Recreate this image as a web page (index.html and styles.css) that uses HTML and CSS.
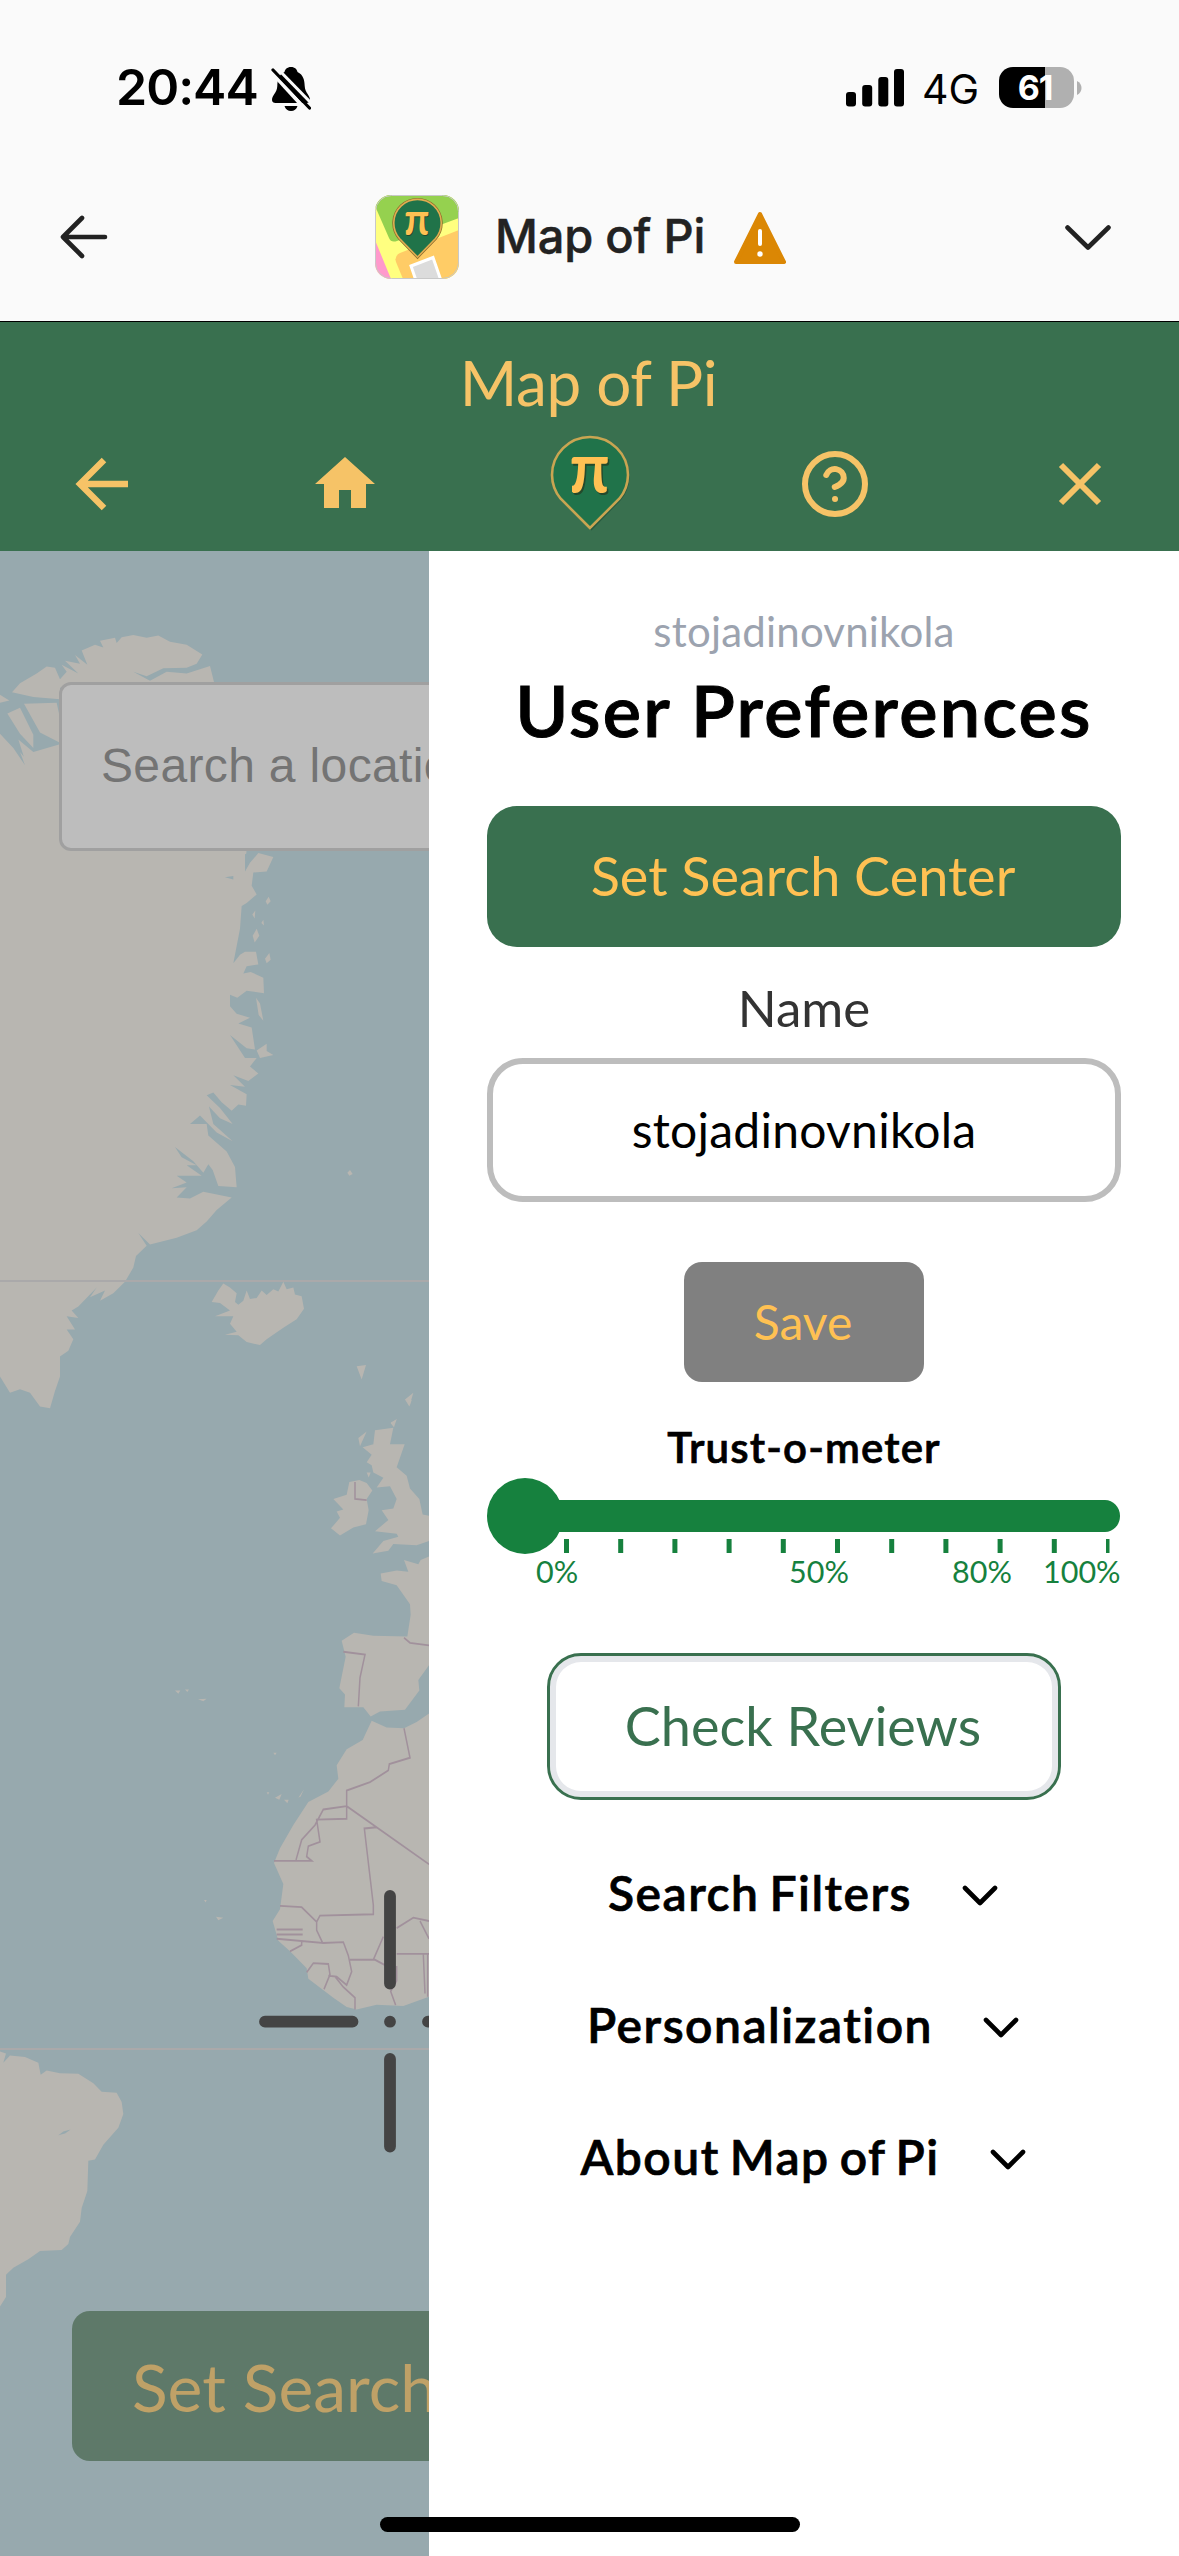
FILE: index.html
```html
<!DOCTYPE html>
<html lang="en">
<head>
<meta charset="utf-8">
<title>Map of Pi</title>
<link rel="stylesheet" href="styles.css">
</head>
<body>
<div class="screen">
  <div class="status">
    <span class="time">20:44</span>
    <svg class="bell" width="40" height="46" viewBox="0 0 40 46">
      <path d="M20 1c-4 0-6 2.500-6.500 5C7.500 9 6.500 14 6.300 20 6 27 1 29 1 34c0 2 1.500 3 3.500 3h31c2 0 3.500-1 3.500-3 0-5-5-7-5.300-14-.2-6-1.200-11-7.200-14C26 3.500 24 1 20 1zM13.500 40h13c-1 3.500-3.500 5-6.500 5s-5.500-1.500-6.500-5z"/>
      <path d="M-1 4.500 37 46" stroke="#fafafa" stroke-width="4"/><path d="M3 -1 41 38" stroke="#fafafa" stroke-width="3"/>
      <path d="M2 4 38.500 42" stroke="#000" stroke-width="3.200" stroke-linecap="round"/>
    </svg>
    <svg class="signal" width="58" height="38" viewBox="0 0 58 38"><rect y="23" width="10" height="14.500" rx="3"/><rect x="16.200" y="16" width="10" height="21.500" rx="3"/><rect x="32.300" y="8" width="10" height="29.500" rx="3"/><rect x="48" width="10" height="37.500" rx="3"/></svg>
    <span class="net">4G</span>
    <div class="battery"><span>61</span></div>
    <svg width="5" height="14" viewBox="0 0 5 14" class="nub"><path d="M0 0c6 3 6 11 0 14z" fill="#b0b0b0"/></svg>
  </div>

  <div class="browser">
    <svg class="b-back" width="50" height="44" viewBox="0 0 50 44"><path d="M24 3 5 22l19 19M5 22h42" fill="none" stroke="#222" stroke-width="4.600" stroke-linecap="round" stroke-linejoin="round"/></svg>
    <svg class="app" width="84" height="84" viewBox="0 0 84 84">
      <clipPath id="app-clip"><rect width="84" height="84" rx="16"/></clipPath>
      <g clip-path="url(#app-clip)">
        <path fill="#ffff80" d="M0 0h84v84H0z"/>
        <path fill="#95d14f" d="M0 0h84v23L22 46q-6 2-8-3L0 11z"/>
        <path fill="#ff99cc" d="M0 45l16 39H0z"/>
        <path fill="#ffcc66" d="M84 35v49H28l-7-17q-2-6 4-9z"/>
        <path fill="#dcdcdc" stroke="#fff" stroke-width="3" d="M36 71l22-8.500 9 26H42z"/>
        <path fill="#207349" stroke="#8b6a2c" stroke-width="3" d="M42.500 62 24.500 43.500A23.700 23.700 0 1 1 60.500 43.500z"/>
        <path fill="#207349" stroke="#e0ad50" stroke-width="1.600" d="M42.500 62 24.500 43.500A23.700 23.700 0 1 1 60.500 43.500z"/>
        <text class="pi shade" x="30" y="40.500" font-size="43" textLength="25" lengthAdjust="spacingAndGlyphs">π</text>
        <text class="pi" x="29.300" y="39.800" font-size="43" textLength="25" lengthAdjust="spacingAndGlyphs">π</text>
      </g>
      <rect x=".5" y=".5" width="83" height="83" rx="16" fill="none" stroke="#c8c8c8"/>
    </svg>
    <span class="b-title">Map of Pi</span>
    <svg class="warn" width="54" height="54" viewBox="0 0 54 54"><path d="M27 3 51 51H3z" fill="#db8704" stroke="#db8704" stroke-width="4" stroke-linejoin="round"/><path d="M27 20v13" stroke="#fff" stroke-width="4" stroke-linecap="round"/><circle cx="27" cy="43" r="2.700" fill="#fff"/></svg>
    <svg class="b-down" width="46" height="26" viewBox="0 0 46 26"><path d="M2.500 2.500 23 22.500 43.500 2.500" fill="none" stroke="#222" stroke-width="4.600" stroke-linecap="round" stroke-linejoin="round"/></svg>
  </div>

  <header class="header">
    <div class="brand">Map of Pi</div>
    <nav class="nav">
      <svg width="72" height="72" viewBox="0 0 72 72"><path d="M40 12 16 36l24 24M16 36h48" fill="none" stroke="#f6c367" stroke-width="6.400"/></svg>
      <svg width="72" height="72" viewBox="0 0 24 24"><path d="M10 20v-6h4v6h5v-8h3L12 3 2 12h3v8z" fill="#f6c367"/></svg>
      <svg class="pin" width="84" height="100" viewBox="0 0 84 100">
        <path d="M43.500 96.500 14 66A37.800 37.800 0 0 1 3.500 42a39 39 0 0 1 78 0 37.800 37.800 0 0 1-8.500 24z" fill="#1b4a33" opacity=".6"/>
        <path d="M42 94 12.500 64.500A37.800 37.800 0 0 1 4 41a38 38 0 0 1 76 0 37.800 37.800 0 0 1-8.500 23.500z" fill="#20734a" stroke="#c9a552" stroke-width="2.600"/>
        <text class="pi shade" x="23" y="60.500" font-size="71" textLength="40" lengthAdjust="spacingAndGlyphs">π</text>
        <text class="pi" x="21.500" y="58.800" font-size="71" textLength="40" lengthAdjust="spacingAndGlyphs">π</text>
      </svg>
      <svg width="72" height="72" viewBox="0 0 24 24" fill="none" stroke="#f6c367" stroke-width="2" stroke-linecap="round"><circle cx="12" cy="12" r="10"/><path d="M9.090 9a3 3 0 0 1 5.830 1c0 2-3 3-3 3M12 17h.01"/></svg>
      <svg width="72" height="72" viewBox="0 0 72 72"><path d="M17 17 55 55M55 17 17 55" stroke="#f6c367" stroke-width="6"/></svg>
    </nav>
  </header>

  <main class="main">
    <section class="map">
      <svg class="tiles" width="429" height="2005" viewBox="0 551 429 2005">
        <!-- Greenland, Iceland and the northern islands -->
        <g transform="translate(0 550) scale(.33333 .574)" fill="#b8b6b1">
          <path d="M0 252 28 262 0 266zM22 285 60 275 100 322 100 345 60 320zM72 268 170 266 177 285V335L120 318zM36 248 60 232 110 215 140 203 165 205 180 225 200 212 185 200 235 215 195 193 240 198 225 183 262 200 245 175 285 165 310 170 300 158 345 153 350 162 365 152 400 148 440 153 475 149 510 160 560 165 607 182 590 198 560 205 490 206 440 220 400 212 450 228 500 212 560 215 630 202 642 230 500 240H180V260L100 256z"/>
          <path d="M0 320 40 345 75 375 60 352 92 375 105 392 85 385 55 330 100 352 200 335 642 230 720 300 740 520 735 560 750 545 775 528 820 535 800 560 760 562 755 585 770 600 740 615 725 620 720 660 700 720 720 705 735 700 768 700 775 722 740 725 730 738 752 735 790 745 792 772 740 768 712 780 690 775 690 795 710 808 750 815 715 825 755 832 765 870 740 868 690 845 735 885 770 885 750 900 775 912 745 925 700 915 735 935 690 932 740 948 738 968 715 966 695 977 665 962 640 945 620 950 660 972 698 1000 660 990 620 965 600 940 625 965 640 1000 698 1030 650 1015 600 985 560 965 600 985 570 1000 620 1000 625 1020 680 1048 705 1075 710 1110 655 1108 638 1080 625 1070 610 1085 580 1065 525 1040 545 1058 590 1072 560 1072 605 1090 530 1090 560 1102 515 1112 560 1110 530 1128 570 1130 610 1118 695 1128 650 1150 620 1170 590 1185 530 1198 450 1210 415 1190 440 1212 408 1230 400 1250 375 1275 340 1295 300 1308 315 1290 270 1302 290 1285 235 1318 215 1325 235 1338 200 1335 225 1358 200 1358 220 1375 205 1395 180 1405 180 1440 165 1465 150 1495 120 1492 90 1468 60 1462 30 1468 0 1440Z"/>
          <path d="M635 1310 655 1290 670 1278 690 1285 710 1295 705 1310 715 1315 730 1308 740 1290 750 1305 770 1303 785 1290 800 1298 820 1288 835 1292 850 1275 860 1288 880 1285 885 1297 905 1300 912 1322 890 1340 850 1355 800 1375 780 1385 740 1380 715 1368 675 1367 710 1362 690 1348 700 1335 645 1335 690 1325 660 1312z"/>
          <path d="M1042 1085 1050 1080 1058 1087 1048 1090zM1070 1422 1098 1420 1085 1445zM1215 1480 1240 1468 1228 1492zM1172 1520 1190 1515 1180 1526zM770 872 800 860 800 873 820 880 780 885zM768 780 780 790 790 820 776 810zM795 712 808 702 812 714 800 720zM797 612 806 604 812 612 802 618zM757 635 766 628 764 642zM784 650 790 644 792 654zM758 672 770 660 778 672 764 684z"/>
          <path d="M675 570 700 568 700 574zM735 560 748 527 735 530z" fill="#97a9ae"/>
        </g>
        <!-- Europe and West Africa -->
        <g transform="translate(0 1400) scale(.33333 .42088)">
          <g fill="#b8b6b1">
            <path d="M1220 0h15l-6 14zM1172 55 1190 45 1182 65z"/>
            <path d="M1125 72 1180 66 1170 105 1214 105 1190 160 1220 180 1230 210 1258 235 1268 272 1287 275V335L1250 345 1180 342 1165 358 1118 365 1150 335 1195 325 1190 318 1125 312 1165 285 1145 262 1180 258 1190 235 1170 205 1130 208 1150 185 1120 172 1115 155 1100 148 1115 130 1088 112 1120 105zM1075 90 1100 75 1080 110zM1100 172h12l-6 12z"/>
            <path d="M1048 195 1078 190 1100 197 1117 215 1100 235 1106 262 1098 295 1060 303 1020 322 993 305 1020 280 1010 265 1030 260 1000 235 1040 225z"/>
            <path d="M1287 372 1262 380 1255 390 1212 380 1225 408 1190 405 1142 412 1145 430 1190 440 1230 485 1232 510 1222 562 1120 560 1062 553 1025 572 1037 610 1018 685 1035 700 1033 730 1090 730 1112 752 1140 740 1215 736 1258 690 1255 665 1287 630z"/>
            <path d="M1287 745 1250 765 1212 780 1160 778 1115 762 1088 808 1040 830 1010 868 1015 900 985 930 925 955 880 1010 840 1065 822 1100 850 1150 840 1210 818 1238 835 1285 870 1310 920 1350 925 1375 1000 1420 1040 1442 1070 1448 1130 1437 1210 1440 1287 1418z"/>
            <path d="M525 690h16l-6 8zM555 688h12l-5 6zM594 711 620 710 610 716zM820 838h10l-5 6zM825 945 845 936 838 950zM852 950h14l-4 8zM895 945 912 925 902 942zM800 932h8l-4 6zM612 1188h8l-3 6zM648 1228 670 1230 655 1236z"/>
          </g>
          <g class="borders">
            <path d="M1065 195V235L1100 238M1212 565 1230 577 1287 583M1030 598 1095 605 1080 660 1075 728M1212 780 1230 850 1168 865 1165 880 1110 908 1040 928V995L950 997 960 1050 925 1060 920 1085 935 1095H822M1040 965 970 973 945 1010 905 1045 888 1093M1040 965 1287 1103M1130 1015 1093 1018 1120 1200V1222L960 1225 950 1240 905 1205 840 1202M950 1240 950 1260 968 1290 830 1280M968 1290 1030 1288 1045 1320 1055 1358 1040 1390 1010 1370 985 1368M830 1258h78M830 1270h78M870 1310 905 1295 905 1285M920 1360 940 1338 985 1340 990 1365 972 1400M1005 1370 1030 1395 1065 1420V1448M1050 1330H1125L1155 1343M1120 1330 1150 1275M1190 1255 1240 1230 1287 1238M1260 1238 1287 1280M1190 1316H1287M1270 1318 1275 1410M1190 1345V1380L1172 1405 1187 1438M1283 1316V1418"/>
          </g>
        </g>
        <!-- South America -->
        <g transform="translate(0 2020) scale(.33333 .34184)" fill="#b8b6b1">
          <path d="M0 92 18 98 10 125 30 104 75 108 115 125 122 160 140 148 180 156 235 157 280 185 305 210 350 213 365 240 370 275 355 315 310 365 285 408 265 412 262 500 245 550 240 590 210 635 205 655 185 673 120 676 85 700 40 725 18 745 18 810 0 838z"/>
          <path d="M175 337 190 326 212 320 195 332z" fill="#97a9ae"/>
        </g>
        <path d="M0 1281h429M0 2049h429" stroke="#aaa9aa" stroke-width="2"/>
        <path d="M265 2021.700h87.500M390 1896v87.500M390 2059v87.500M390 2021.700v.01M428 2021.700h20" stroke="#444" stroke-width="11.800" stroke-linecap="round"/>
      </svg>
      <div class="search">Search a location</div>
      <div class="map-btn">Set Search Center</div>
    </section>

    <aside class="panel">
      <div class="user">stojadinovnikola</div>
      <h1>User Preferences</h1>
      <div class="primary">Set Search Center</div>
      <div class="label">Name</div>
      <div class="field">stojadinovnikola</div>
      <div class="save">Save</div>
      <div class="trust">Trust-o-meter</div>
      <svg class="meter" width="634" height="76" viewBox="0 0 634 76">
        <g fill="#16813e"><circle cx="38" cy="38" r="38"/><path d="M38 22H618a15 16 0 0 1 0 32H38z"/></g>
        <path d="M79.500 68H625" stroke="#16813e" stroke-width="14" stroke-dasharray="5 49.200" transform="translate(-2.500 0)"/>
      </svg>
      <div class="scale"><span>0%</span><span>50%</span><span>80%</span><span>100%</span></div>
      <div class="reviews">Check Reviews</div>
      <div class="row">Search Filters<svg class="chev" width="36" height="22" viewBox="0 0 36 22"><path d="M3 3 18 18 33 3"/></svg></div>
      <div class="row">Personalization<svg class="chev" width="36" height="22" viewBox="0 0 36 22"><path d="M3 3 18 18 33 3"/></svg></div>
      <div class="row">About Map of Pi<svg class="chev" width="36" height="22" viewBox="0 0 36 22"><path d="M3 3 18 18 33 3"/></svg></div>
    </aside>
  </main>
  <div class="home-bar"></div>
</div>
</body>
</html>
```

FILE: styles.css
```css
* { box-sizing: border-box; }
body { margin: 0; background: #fff; }
svg { display: block; flex: none; }
.screen {
  position: relative;
  width: 1179px;
  height: 2556px;
  overflow: hidden;
  display: flex;
  flex-direction: column;
  font-family: Lato, sans-serif;
  white-space: nowrap;
}

.status {
  height: 176px;
  flex: none;
  background: #fafafa;
  display: flex;
  align-items: flex-start;
  padding-left: 116px;
  font-family: Inter, sans-serif;
  color: #000;
}
.time { width: 155px; margin-top: 57px; font-size: 50px; line-height: 60px; font-weight: 600; letter-spacing: -1px; }
.bell { margin-top: 66px; }
.signal { margin: 69px 0 0 535px; }
.net { width: 75px; margin: 64px 0 0 18px; font-size: 41px; line-height: 50px; }
.battery {
  width: 75px;
  height: 41px;
  margin: 67px 0 0 2px;
  border-radius: 14px;
  background: linear-gradient(90deg, #000 46px, #b0b0b0 46px);
  color: #fff;
  font-size: 34px;
  line-height: 41px;
  font-weight: 700;
  text-align: center;
  letter-spacing: -1px;
  padding-right: 3px;
}
.nub { margin: 81px 0 0 3px; }

.browser {
  height: 146px;
  flex: none;
  background: #fafafa;
  border-bottom: 1px solid #000;
  display: flex;
  align-items: flex-start;
  padding-left: 58px;
}
.b-back { margin-top: 39px; }
.app { margin: 19px 0 0 267px; }
.b-title { width: 235px; margin: 30px 0 0 36px; font: 500 47px/60px Inter, sans-serif; letter-spacing: -.2px; color: #222; -webkit-text-stroke: .5px #222; }
.warn { margin-top: 35px; margin-left: 3px; }
.b-down { margin: 49px 0 0 278px; }
.pi { font-family: Lato, sans-serif; font-weight: 700; fill: #ffc153; }
.pi.shade { fill: #234a2c; }

.header { height: 229px; flex: none; background: #39704f; color: #f6c367; }
.brand { text-align: center; font-size: 62px; line-height: 74px; padding: 23px 2px 0 0; letter-spacing: -.4px; }
.nav { display: flex; justify-content: space-between; align-items: center; padding: 2px 63px 0 64px; height: 128px; }
.pin { margin: 0 -6px; }

.main { flex: 1; display: grid; grid-template-columns: 429px 750px; min-height: 0; }
.map { position: relative; overflow: hidden; background: #97a9ae; }
.borders { fill: none; stroke: #a1919c; stroke-width: 4.500; }
.search {
  position: absolute;
  left: 59px;
  top: 131px;
  width: 1060px;
  height: 169px;
  border: 3px solid #a0a0a0;
  border-radius: 12px;
  background: #bdbdbd;
  padding-left: 39px;
  font: 48px/161px "Liberation Sans", sans-serif;
  letter-spacing: .35px;
  color: #747474;
}
.map-btn {
  position: absolute;
  left: 72px;
  top: 1760px;
  width: 1035px;
  height: 150px;
  border-radius: 18px;
  background: #5e7969;
  padding-left: 60px;
  color: #bfa167;
  font-size: 66px;
  line-height: 151px;
}

.panel { background: #fff; padding: 55px 58px 0; display: flex; flex-direction: column; align-items: center; }
.user { font-size: 42px; line-height: 50px; color: #9ca3af; letter-spacing: .2px; }
h1 { margin: 10px 0 54px; font-size: 72px; line-height: 86px; font-weight: 600; letter-spacing: 2.300px; color: #000; -webkit-text-stroke: 1px #000; }
.primary { width: 634px; height: 141px; padding-right: 2px; border-radius: 30px; background: #39704f; color: #ffc153; font-size: 54px; line-height: 139px; text-align: center; }
.label { margin: 31px 0 20px; font-size: 51px; line-height: 60px; color: #333; }
.field { width: 634px; height: 144px; border: 6px solid #bdbdbd; border-radius: 36px; font-size: 48px; line-height: 131px; letter-spacing: .25px; text-align: center; }
.save { margin: 60px 0 40px; width: 240px; height: 120px; padding-right: 2px; border-radius: 18px; background: #808080; color: #ffc153; font-size: 48px; line-height: 120px; text-align: center; }
.trust { font-size: 42px; line-height: 50px; font-weight: 600; letter-spacing: 1.150px; -webkit-text-stroke: .7px #000; }
.meter { margin-top: 6px; }
.scale { width: 634px; display: grid; grid-template-columns: 253px 163px 91px auto; padding-left: 49px; font-size: 30.500px; line-height: 34px; padding-bottom: 2px; color: #16813e; }
.reviews {
  margin: 63px 0 27px;
  width: 514px;
  height: 147px;
  padding-right: 2px;
  border: 3px solid #39704f;
  border-radius: 34px;
  box-shadow: inset 0 0 0 6px #e5e7eb;
  color: #39704f;
  font-size: 54px;
  line-height: 139px;
  text-align: center;
}
.row { height: 132px; display: flex; align-items: center; gap: 50px; padding: 0 2px 1px 0; font-size: 48px; font-weight: 600; letter-spacing: 1.500px; word-spacing: -3.500px; -webkit-text-stroke: .7px #000; }
.chev { margin-top: 6px; fill: none; stroke: #000; stroke-width: 4.600; stroke-linecap: round; stroke-linejoin: round; }
.home-bar { position: absolute; left: 380px; top: 2517px; width: 420px; height: 15px; border-radius: 8px; background: #000; }
```
